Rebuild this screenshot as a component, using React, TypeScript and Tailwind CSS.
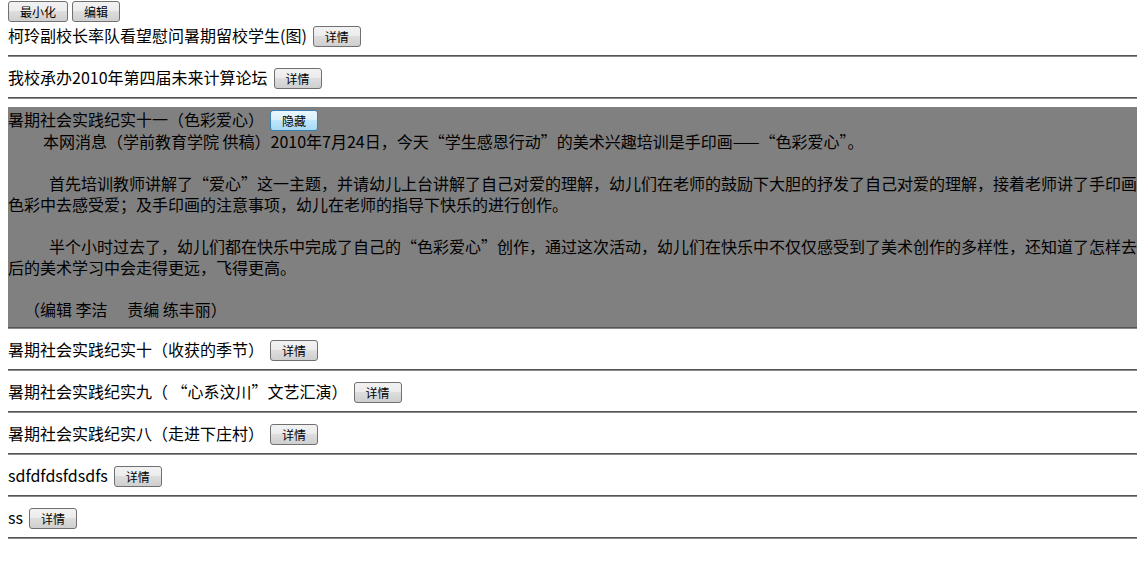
import React from "react";

const FONT = "font-['Microsoft_YaHei','Noto_Sans_CJK_SC',sans-serif]";

function Btn({ children, active }: { children: React.ReactNode; active?: boolean }) {
  return (
    <button
      className={
        active
          ? "h-[21px] shrink-0 rounded-[3px] border border-[#3c7fb1] bg-[linear-gradient(#eaf6fd,#d9f0fc_50%,#bee6fd_50%,#a7d9f5)] px-[11px] text-[12px] leading-none text-black"
          : "h-[21px] shrink-0 rounded-[3px] border border-[#707070] bg-[linear-gradient(#f2f2f2,#ebebeb_50%,#dddddd_50%,#cfcfcf)] px-[11px] text-[12px] leading-none text-black"
      }
    >
      {children}
    </button>
  );
}

function Hr() {
  return <div className="h-[2px] border-t border-b border-t-[#555] border-b-[#8a8a8a]" />;
}

function Row({ title }: { title: string }) {
  return (
    <>
      <div className="flex h-[24px] items-center whitespace-nowrap">
        <span>{title}</span>
        <span className="ml-[6px]">
          <Btn>详情</Btn>
        </span>
      </div>
      <div className="h-[8px]" />
      <Hr />
      <div className="h-[8px]" />
    </>
  );
}

export default function App() {
  return (
    <div className={`h-screen w-full overflow-hidden bg-white text-[16px] text-black ${FONT}`}>
      <div className="w-[1400px] pl-[8px]">
        <div className="flex h-[23px] items-center gap-[4px]">
          <Btn>最小化</Btn>
          <Btn>编辑</Btn>
        </div>
        <Row title="柯玲副校长率队看望慰问暑期留校学生(图)" />
        <Row title="我校承办2010年第四届未来计算论坛" />
        <div className="bg-[#808080] pb-[7px]">
          <div className="flex h-[24px] items-center whitespace-nowrap">
            <span>暑期社会实践纪实十一（色彩爱心）</span>
            <span className="ml-[6px]">
              <Btn active>隐藏</Btn>
            </span>
          </div>
          <div className="whitespace-nowrap leading-[21px]">
            <div className="h-[21px]">
              <span className="inline-block w-[35px]" />
              本网消息（学前教育学院 供稿）2010年7月24日，今天“学生感恩行动”的美术兴趣培训是手印画——“色彩爱心”。
            </div>
            <div className="h-[21px]" />
            <div className="h-[21px]">
              <span className="inline-block w-[41px]" />
              首先培训教师讲解了“爱心”这一主题，并请幼儿上台讲解了自己对爱的理解，幼儿们在老师的鼓励下大胆的抒发了自己对爱的理解，接着老师讲了手印画的方法，让幼儿在
            </div>
            <div className="h-[21px]">
              色彩中去感受爱；及手印画的注意事项，幼儿在老师的指导下快乐的进行创作。
            </div>
            <div className="h-[21px]" />
            <div className="h-[21px]">
              <span className="inline-block w-[41px]" />
              半个小时过去了，幼儿们都在快乐中完成了自己的“色彩爱心”创作，通过这次活动，幼儿们在快乐中不仅仅感受到了美术创作的多样性，还知道了怎样去表现美，相信他们在今
            </div>
            <div className="h-[21px]">后的美术学习中会走得更远，飞得更高。</div>
            <div className="h-[21px]" />
            <div className="h-[21px]">
              <span className="inline-block w-[16px]" />
              （编辑 李洁　 责编 练丰丽）
            </div>
          </div>
        </div>
        <Hr />
        <div className="h-[8px]" />
        <Row title="暑期社会实践纪实十（收获的季节）" />
        <Row title="暑期社会实践纪实九（ “心系汶川”文艺汇演）" />
        <Row title="暑期社会实践纪实八（走进下庄村）" />
        <Row title="sdfdfdsfdsdfs" />
        <Row title="ss" />
      </div>
    </div>
  );
}
